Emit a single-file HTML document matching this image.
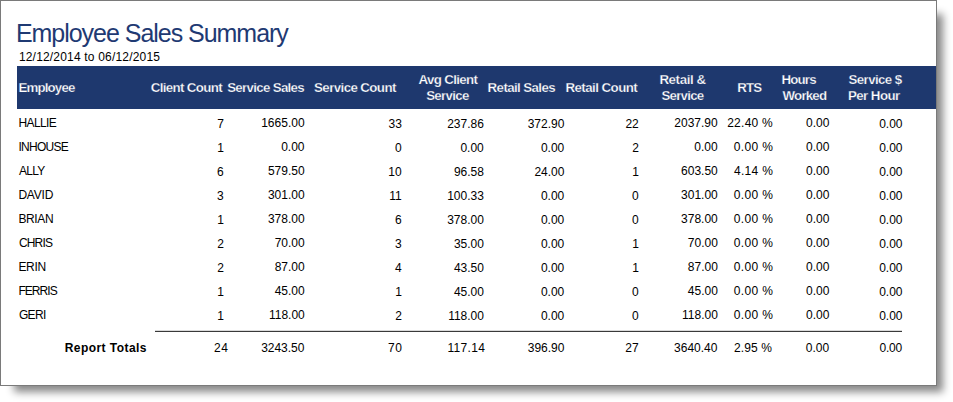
<!DOCTYPE html><html><head><meta charset="utf-8"><title>Employee Sales Summary</title><style>

html,body{margin:0;padding:0;background:#fff;}
body{width:953px;height:402px;position:relative;overflow:hidden;font-family:"Liberation Sans",sans-serif;}
#box{position:absolute;left:0;top:0;width:935px;height:384px;border:1px solid #7a7a7a;background:#fff;box-shadow:10px 10px 8px -4px rgba(0,0,0,0.47);}
#hdr{position:absolute;left:17px;top:66px;width:919px;height:43px;background:#1e386e;}
#tl{position:absolute;left:155px;top:330px;width:747px;height:1px;background:#3a3a3a;border-top:1px solid #dadada;box-sizing:content-box;}
.t{position:absolute;white-space:pre;line-height:normal;}

</style></head><body>
<div id="box"></div><div id="hdr"></div><div id="tl"></div>
<span class="t" style="left:15.9px;top:19.0px;font-size:25px;color:#1f3a73;letter-spacing:-1.029px;">Employee Sales Summary</span>
<span class="t" style="left:18.9px;top:50.0px;font-size:12px;color:#000;letter-spacing:0.185px;">12/12/2014 to 06/12/2015</span>
<span class="t" style="left:18.4px;top:80.0px;font-size:13.3px;color:#fff;font-weight:700;-webkit-text-stroke:0.25px #1e386e;letter-spacing:-0.836px;">Employee</span>
<span class="t" style="left:150.8px;top:80.0px;font-size:13.3px;color:#fff;font-weight:700;-webkit-text-stroke:0.25px #1e386e;letter-spacing:-0.655px;">Client Count</span>
<span class="t" style="left:227.2px;top:80.0px;font-size:13.3px;color:#fff;font-weight:700;-webkit-text-stroke:0.25px #1e386e;letter-spacing:-0.688px;">Service Sales</span>
<span class="t" style="left:314.1px;top:80.0px;font-size:13.3px;color:#fff;font-weight:700;-webkit-text-stroke:0.25px #1e386e;letter-spacing:-0.596px;">Service Count</span>
<span class="t" style="left:418.4px;top:72.0px;font-size:13.3px;color:#fff;font-weight:700;-webkit-text-stroke:0.25px #1e386e;letter-spacing:-0.622px;">Avg Client</span>
<span class="t" style="left:426.2px;top:88.0px;font-size:13.3px;color:#fff;font-weight:700;-webkit-text-stroke:0.25px #1e386e;letter-spacing:-0.692px;">Service</span>
<span class="t" style="left:487.6px;top:80.0px;font-size:13.3px;color:#fff;font-weight:700;-webkit-text-stroke:0.25px #1e386e;letter-spacing:-0.6px;">Retail Sales</span>
<span class="t" style="left:565.4px;top:80.0px;font-size:13.3px;color:#fff;font-weight:700;-webkit-text-stroke:0.25px #1e386e;letter-spacing:-0.541px;">Retail Count</span>
<span class="t" style="left:659.4px;top:72.0px;font-size:13.3px;color:#fff;font-weight:700;-webkit-text-stroke:0.25px #1e386e;letter-spacing:-0.386px;">Retail &amp;</span>
<span class="t" style="left:661.4px;top:88.0px;font-size:13.3px;color:#fff;font-weight:700;-webkit-text-stroke:0.25px #1e386e;letter-spacing:-0.742px;">Service</span>
<span class="t" style="left:737.3px;top:80.0px;font-size:13.3px;color:#fff;font-weight:700;-webkit-text-stroke:0.25px #1e386e;letter-spacing:-0.9px;">RTS</span>
<span class="t" style="left:781.6px;top:72.0px;font-size:13.3px;color:#fff;font-weight:700;-webkit-text-stroke:0.25px #1e386e;letter-spacing:-0.863px;">Hours</span>
<span class="t" style="left:782.6px;top:88.0px;font-size:13.3px;color:#fff;font-weight:700;-webkit-text-stroke:0.25px #1e386e;letter-spacing:-0.82px;">Worked</span>
<span class="t" style="left:848.5px;top:72.0px;font-size:13.3px;color:#fff;font-weight:700;-webkit-text-stroke:0.25px #1e386e;letter-spacing:-0.594px;">Service $</span>
<span class="t" style="left:848.0px;top:88.0px;font-size:13.3px;color:#fff;font-weight:700;-webkit-text-stroke:0.25px #1e386e;letter-spacing:-0.571px;">Per Hour</span>
<span class="t" style="left:18.4px;top:116.0px;font-size:12px;color:#000;letter-spacing:-0.58px;">HALLIE</span>
<span class="t" style="left:217.3px;top:117.0px;font-size:12px;color:#000;">7</span>
<span class="t" style="left:261.2px;top:116.0px;font-size:12px;color:#000;">1665.00</span>
<span class="t" style="left:388.55px;top:117.0px;font-size:12px;color:#000;">33</span>
<span class="t" style="left:447.15px;top:117.0px;font-size:12px;color:#000;">237.86</span>
<span class="t" style="left:527.65px;top:117.0px;font-size:12px;color:#000;">372.90</span>
<span class="t" style="left:625.45px;top:117.0px;font-size:12px;color:#000;">22</span>
<span class="t" style="left:674.3px;top:116.0px;font-size:12px;color:#000;">2037.90</span>
<span class="t" style="left:727.2px;top:116.0px;font-size:12px;color:#000;letter-spacing:0.258px;">22.40 %</span>
<span class="t" style="left:806.1px;top:116.0px;font-size:12px;color:#000;">0.00</span>
<span class="t" style="left:879.2px;top:117.0px;font-size:12px;color:#000;">0.00</span>
<span class="t" style="left:18.4px;top:140.0px;font-size:12px;color:#000;letter-spacing:-0.725px;">INHOUSE</span>
<span class="t" style="left:217.3px;top:141.0px;font-size:12px;color:#000;">1</span>
<span class="t" style="left:281.2px;top:140.0px;font-size:12px;color:#000;">0.00</span>
<span class="t" style="left:395.05px;top:141.0px;font-size:12px;color:#000;">0</span>
<span class="t" style="left:460.4px;top:141.0px;font-size:12px;color:#000;">0.00</span>
<span class="t" style="left:540.9px;top:141.0px;font-size:12px;color:#000;">0.00</span>
<span class="t" style="left:632.2px;top:141.0px;font-size:12px;color:#000;">2</span>
<span class="t" style="left:694.3px;top:140.0px;font-size:12px;color:#000;">0.00</span>
<span class="t" style="left:733.7px;top:140.0px;font-size:12px;color:#000;letter-spacing:0.36px;">0.00 %</span>
<span class="t" style="left:806.1px;top:140.0px;font-size:12px;color:#000;">0.00</span>
<span class="t" style="left:879.2px;top:141.0px;font-size:12px;color:#000;">0.00</span>
<span class="t" style="left:19.0px;top:164.0px;font-size:12px;color:#000;letter-spacing:-0.733px;">ALLY</span>
<span class="t" style="left:217.05px;top:165.0px;font-size:12px;color:#000;">6</span>
<span class="t" style="left:267.95px;top:164.0px;font-size:12px;color:#000;">579.50</span>
<span class="t" style="left:388.3px;top:165.0px;font-size:12px;color:#000;">10</span>
<span class="t" style="left:453.9px;top:165.0px;font-size:12px;color:#000;">96.58</span>
<span class="t" style="left:534.4px;top:165.0px;font-size:12px;color:#000;">24.00</span>
<span class="t" style="left:632.2px;top:165.0px;font-size:12px;color:#000;">1</span>
<span class="t" style="left:681.05px;top:164.0px;font-size:12px;color:#000;">603.50</span>
<span class="t" style="left:733.95px;top:164.0px;font-size:12px;color:#000;letter-spacing:0.31px;">4.14 %</span>
<span class="t" style="left:806.1px;top:164.0px;font-size:12px;color:#000;">0.00</span>
<span class="t" style="left:879.2px;top:165.0px;font-size:12px;color:#000;">0.00</span>
<span class="t" style="left:18.4px;top:188.0px;font-size:12px;color:#000;letter-spacing:-0.188px;">DAVID</span>
<span class="t" style="left:217.05px;top:189.0px;font-size:12px;color:#000;">3</span>
<span class="t" style="left:267.95px;top:188.0px;font-size:12px;color:#000;">301.00</span>
<span class="t" style="left:389.3px;top:189.0px;font-size:12px;color:#000;">11</span>
<span class="t" style="left:447.15px;top:189.0px;font-size:12px;color:#000;">100.33</span>
<span class="t" style="left:540.9px;top:189.0px;font-size:12px;color:#000;">0.00</span>
<span class="t" style="left:631.95px;top:189.0px;font-size:12px;color:#000;">0</span>
<span class="t" style="left:681.05px;top:188.0px;font-size:12px;color:#000;">301.00</span>
<span class="t" style="left:733.7px;top:188.0px;font-size:12px;color:#000;letter-spacing:0.36px;">0.00 %</span>
<span class="t" style="left:806.1px;top:188.0px;font-size:12px;color:#000;">0.00</span>
<span class="t" style="left:879.2px;top:189.0px;font-size:12px;color:#000;">0.00</span>
<span class="t" style="left:18.4px;top:212.0px;font-size:12px;color:#000;letter-spacing:-0.362px;">BRIAN</span>
<span class="t" style="left:217.3px;top:213.0px;font-size:12px;color:#000;">1</span>
<span class="t" style="left:267.95px;top:212.0px;font-size:12px;color:#000;">378.00</span>
<span class="t" style="left:395.05px;top:213.0px;font-size:12px;color:#000;">6</span>
<span class="t" style="left:447.15px;top:213.0px;font-size:12px;color:#000;">378.00</span>
<span class="t" style="left:540.9px;top:213.0px;font-size:12px;color:#000;">0.00</span>
<span class="t" style="left:631.95px;top:213.0px;font-size:12px;color:#000;">0</span>
<span class="t" style="left:681.05px;top:212.0px;font-size:12px;color:#000;">378.00</span>
<span class="t" style="left:733.7px;top:212.0px;font-size:12px;color:#000;letter-spacing:0.36px;">0.00 %</span>
<span class="t" style="left:806.1px;top:212.0px;font-size:12px;color:#000;">0.00</span>
<span class="t" style="left:879.2px;top:213.0px;font-size:12px;color:#000;">0.00</span>
<span class="t" style="left:18.9px;top:236.0px;font-size:12px;color:#000;letter-spacing:-0.812px;">CHRIS</span>
<span class="t" style="left:217.3px;top:237.0px;font-size:12px;color:#000;">2</span>
<span class="t" style="left:274.7px;top:236.0px;font-size:12px;color:#000;">70.00</span>
<span class="t" style="left:395.05px;top:237.0px;font-size:12px;color:#000;">3</span>
<span class="t" style="left:453.9px;top:237.0px;font-size:12px;color:#000;">35.00</span>
<span class="t" style="left:540.9px;top:237.0px;font-size:12px;color:#000;">0.00</span>
<span class="t" style="left:632.2px;top:237.0px;font-size:12px;color:#000;">1</span>
<span class="t" style="left:687.8px;top:236.0px;font-size:12px;color:#000;">70.00</span>
<span class="t" style="left:733.7px;top:236.0px;font-size:12px;color:#000;letter-spacing:0.36px;">0.00 %</span>
<span class="t" style="left:806.1px;top:236.0px;font-size:12px;color:#000;">0.00</span>
<span class="t" style="left:879.2px;top:237.0px;font-size:12px;color:#000;">0.00</span>
<span class="t" style="left:18.4px;top:260.0px;font-size:12px;color:#000;letter-spacing:-0.317px;">ERIN</span>
<span class="t" style="left:217.3px;top:261.0px;font-size:12px;color:#000;">2</span>
<span class="t" style="left:274.7px;top:260.0px;font-size:12px;color:#000;">87.00</span>
<span class="t" style="left:395.05px;top:261.0px;font-size:12px;color:#000;">4</span>
<span class="t" style="left:453.9px;top:261.0px;font-size:12px;color:#000;">43.50</span>
<span class="t" style="left:540.9px;top:261.0px;font-size:12px;color:#000;">0.00</span>
<span class="t" style="left:632.2px;top:261.0px;font-size:12px;color:#000;">1</span>
<span class="t" style="left:687.8px;top:260.0px;font-size:12px;color:#000;">87.00</span>
<span class="t" style="left:733.7px;top:260.0px;font-size:12px;color:#000;letter-spacing:0.36px;">0.00 %</span>
<span class="t" style="left:806.1px;top:260.0px;font-size:12px;color:#000;">0.00</span>
<span class="t" style="left:879.2px;top:261.0px;font-size:12px;color:#000;">0.00</span>
<span class="t" style="left:18.4px;top:284.0px;font-size:12px;color:#000;letter-spacing:-0.94px;">FERRIS</span>
<span class="t" style="left:217.3px;top:285.0px;font-size:12px;color:#000;">1</span>
<span class="t" style="left:274.7px;top:284.0px;font-size:12px;color:#000;">45.00</span>
<span class="t" style="left:395.3px;top:285.0px;font-size:12px;color:#000;">1</span>
<span class="t" style="left:453.9px;top:285.0px;font-size:12px;color:#000;">45.00</span>
<span class="t" style="left:540.9px;top:285.0px;font-size:12px;color:#000;">0.00</span>
<span class="t" style="left:631.95px;top:285.0px;font-size:12px;color:#000;">0</span>
<span class="t" style="left:687.8px;top:284.0px;font-size:12px;color:#000;">45.00</span>
<span class="t" style="left:733.7px;top:284.0px;font-size:12px;color:#000;letter-spacing:0.36px;">0.00 %</span>
<span class="t" style="left:806.1px;top:284.0px;font-size:12px;color:#000;">0.00</span>
<span class="t" style="left:879.2px;top:285.0px;font-size:12px;color:#000;">0.00</span>
<span class="t" style="left:18.9px;top:308.0px;font-size:12px;color:#000;letter-spacing:-0.65px;">GERI</span>
<span class="t" style="left:217.3px;top:309.0px;font-size:12px;color:#000;">1</span>
<span class="t" style="left:268.95px;top:308.0px;font-size:12px;color:#000;">118.00</span>
<span class="t" style="left:395.3px;top:309.0px;font-size:12px;color:#000;">2</span>
<span class="t" style="left:448.15px;top:309.0px;font-size:12px;color:#000;">118.00</span>
<span class="t" style="left:540.9px;top:309.0px;font-size:12px;color:#000;">0.00</span>
<span class="t" style="left:631.95px;top:309.0px;font-size:12px;color:#000;">0</span>
<span class="t" style="left:682.05px;top:308.0px;font-size:12px;color:#000;">118.00</span>
<span class="t" style="left:733.7px;top:308.0px;font-size:12px;color:#000;letter-spacing:0.36px;">0.00 %</span>
<span class="t" style="left:806.1px;top:308.0px;font-size:12px;color:#000;">0.00</span>
<span class="t" style="left:879.2px;top:309.0px;font-size:12px;color:#000;">0.00</span>
<span class="t" style="left:64.75px;top:341.0px;font-size:12px;color:#000;font-weight:700;letter-spacing:0.438px;">Report Totals</span>
<span class="t" style="left:214.1px;top:341.0px;font-size:12px;color:#000;letter-spacing:0.4px;">24</span>
<span class="t" style="left:261.2px;top:341.0px;font-size:12px;color:#000;letter-spacing:-0.033px;">3243.50</span>
<span class="t" style="left:387.9px;top:341.0px;font-size:12px;color:#000;letter-spacing:0.6px;">70</span>
<span class="t" style="left:447.5px;top:341.0px;font-size:12px;color:#000;letter-spacing:0.3px;">117.14</span>
<span class="t" style="left:527.8px;top:341.0px;font-size:12px;color:#000;letter-spacing:-0.01px;">396.90</span>
<span class="t" style="left:625.3px;top:341.0px;font-size:12px;color:#000;letter-spacing:0.05px;">27</span>
<span class="t" style="left:674.1px;top:341.0px;font-size:12px;color:#000;">3640.40</span>
<span class="t" style="left:733.9px;top:341.0px;font-size:12px;color:#000;letter-spacing:0.14px;">2.95 %</span>
<span class="t" style="left:805.7px;top:341.0px;font-size:12px;color:#000;letter-spacing:0.067px;">0.00</span>
<span class="t" style="left:879.4px;top:341.0px;font-size:12px;color:#000;letter-spacing:-0.167px;">0.00</span>
</body></html>
